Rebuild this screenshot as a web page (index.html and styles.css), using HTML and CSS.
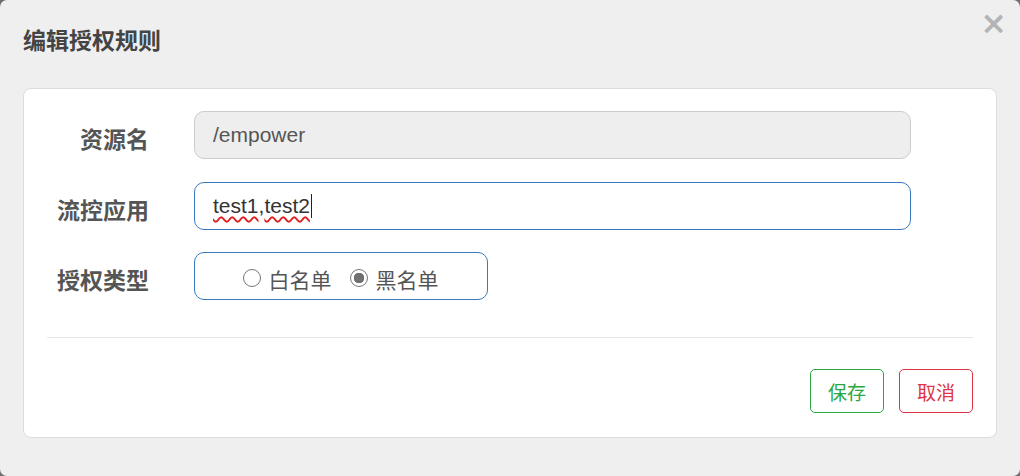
FILE: index.html
```html
<!DOCTYPE html>
<html lang="zh">
<head>
<meta charset="utf-8">
<link rel="stylesheet" href="styles.css">
</head>
<body>
<div class="dialog">
  <div class="header">
    <h3 class="title">编辑授权规则</h3>
    <span class="close">×</span>
  </div>
  <div class="card">
    <div class="form">
      <div class="row">
        <label class="label">资源名</label>
        <div class="input disabled">/empower</div>
      </div>
      <div class="row">
        <label class="label">流控应用</label>
        <div class="input focus"><span class="spell">test1</span>,<span class="spell">test2</span><span class="caret"></span></div>
      </div>
      <div class="row">
        <label class="label">授权类型</label>
        <div class="radio-box">
          <span class="radio"><span class="dot"></span>白名单</span>
          <span class="radio checked"><span class="dot"></span>黑名单</span>
        </div>
      </div>
    </div>
    <div class="sep"></div>
    <div class="actions">
      <button class="btn save">保存</button>
      <button class="btn cancel">取消</button>
    </div>
  </div>
</div>
</body>
</html>
```

FILE: styles.css
```css
html, body {
  margin: 0;
  padding: 0;
  background: #6e6e6e;
}
body {
  font-family: "Liberation Sans", "Noto Sans CJK SC", sans-serif;
}
.dialog {
  width: 1020px;
  height: 476px;
  background: #efefef;
  border-radius: 7px;
  box-sizing: border-box;
  padding: 0 23px;
  display: flex;
  flex-direction: column;
}
.header {
  height: 88px;
  display: flex;
  align-items: center;
  justify-content: space-between;
  position: relative;
}
.title {
  margin: 0;
  margin-top: -10px;
  font-size: 23px;
  font-weight: bold;
  color: #444;
}
.close {
  position: absolute;
  right: -10px;
  top: 5px;
  font-size: 32px;
  font-weight: bold;
  color: #b4b4b4;
  line-height: 36px;
  font-family: "DejaVu Sans", sans-serif;
}
.card {
  background: #fff;
  border: 1px solid #dcdcdc;
  border-radius: 8px;
  height: 350px;
  box-sizing: border-box;
  padding: 22px 23px 0;
}
.form {
  display: flex;
  flex-direction: column;
  gap: 23px;
}
.row {
  display: flex;
  align-items: center;
  height: 48px;
}
.row + .row + .row { margin-top: -1px; }
.label {
  width: 102px;
  text-align: right;
  margin-right: 45px;
  font-size: 23px;
  font-weight: bold;
  color: #555;
  padding-top: 6px;
}
.input {
  width: 717px;
  height: 48px;
  box-sizing: border-box;
  border-radius: 10px;
  border: 1px solid #ccc;
  padding: 0 18px;
  display: flex;
  align-items: center;
  font-size: 21px;
  color: #555;
}
.input.disabled {
  background: #eeeeee;
}
.input.focus {
  border-color: #3a79bd;
  color: #333;
}
.spell {
  text-decoration: underline wavy #e02020;
  text-decoration-thickness: 1.5px;
  text-underline-offset: 3px;
}
.caret {
  display: inline-block;
  width: 1px;
  height: 24px;
  background: #222;
  margin-left: 1px;
}
.radio-box {
  width: 294px;
  height: 48px;
  box-sizing: border-box;
  border: 1px solid #3a79bd;
  border-radius: 10px;
  display: flex;
  align-items: center;
  justify-content: center;
  gap: 18px;
  padding-top: 6px;
  padding-right: 1px;
}
.radio {
  display: flex;
  align-items: center;
  font-size: 21px;
  color: #555;
}
.dot {
  width: 18px;
  height: 18px;
  box-sizing: border-box;
  border: 1.5px solid #777;
  border-radius: 50%;
  margin-right: 8px;
  position: relative;
  top: -1px;
}
.radio.checked .dot {
  border-color: #777;
  background: radial-gradient(circle, #707070 0 5px, #fff 5.5px);
}
.sep {
  height: 1px;
  background: #e6e6e6;
  margin-top: 37px;
}
.actions {
  display: flex;
  justify-content: flex-end;
  gap: 15px;
  margin-top: 31px;
}
.btn {
  width: 74px;
  height: 44px;
  background: #fff;
  border-radius: 5px;
  font-size: 19px;
  font-family: "Liberation Sans", "Noto Sans CJK SC", sans-serif;
  padding: 0;
}
.save {
  border: 1px solid #2aa744;
  color: #2aa744;
}
.cancel {
  border: 1px solid #dc3545;
  color: #dc3545;
}
```
